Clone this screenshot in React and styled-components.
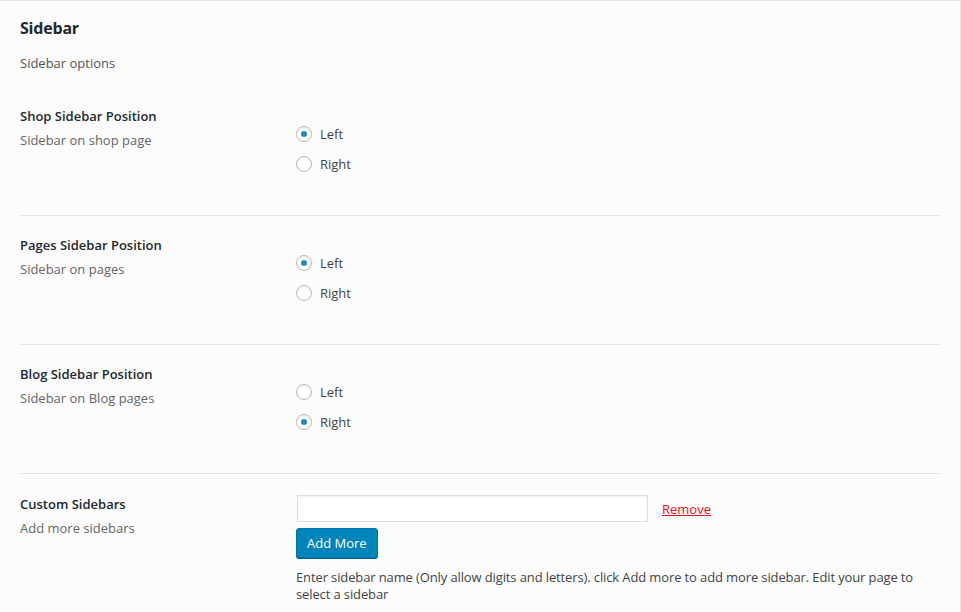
import React from "react";
import styled, { createGlobalStyle } from "styled-components";

const Global = createGlobalStyle`
  html, body { margin: 0; padding: 0; background: #f1f1f1; }
  body { font-family: "Open Sans", "Noto Sans", sans-serif; font-size: 13px; color: #444; }
  #root { min-height: 612px; }
`;

const Panel = styled.div`
  box-sizing: border-box;
  width: 961px;
  min-height: 612px;
  background: #fcfcfc;
  border-top: 1px solid #e5e5e5;
  border-right: 1px solid #e5e5e5;
  padding: 0 20px;
`;

const Header = styled.div`
  padding-top: 15px;
  padding-bottom: 14px;
`;

const Title = styled.h2`
  margin: 0;
  font-size: 16px;
  line-height: 24px;
  font-weight: 700;
  color: #23282d;
  letter-spacing: -0.2px;
`;

const Intro = styled.p`
  margin: 13px 0 0;
  line-height: 20px;
  color: #555;
`;

const Row = styled.div`
  box-sizing: border-box;
  display: grid;
  grid-template-columns: 276px 1fr;
  height: ${(p) => (p.$last ? "auto" : "129px")};
  border-bottom: ${(p) => (p.$last ? "none" : "1px solid #e3e3e3")};
`;

const LabelCol = styled.div`
  padding-top: ${(p) => (p.$last ? "20px" : "19px")};
`;

const RowTitle = styled.div`
  font-weight: 600;
  color: #23282d;
  line-height: 20px;
`;

const RowDesc = styled.div`
  margin-top: 4px;
  line-height: 20px;
  color: #666;
`;

const FieldCol = styled.div`
  padding-top: ${(p) => p.$top}px;
`;

const RadioList = styled.div`
  display: flex;
  flex-direction: column;
`;

const RadioLabel = styled.label`
  display: flex;
  align-items: center;
  height: 30px;
  color: #444;
  cursor: pointer;
`;

const Radio = styled.input.attrs({ type: "radio" })`
  appearance: none;
  -webkit-appearance: none;
  box-sizing: border-box;
  width: 16px;
  height: 16px;
  margin: 0 8px 0 0;
  border: 1px solid #b4b9be;
  border-radius: 50%;
  background: #fff;
  box-shadow: inset 0 1px 2px rgba(0, 0, 0, 0.07);
  display: inline-flex;
  align-items: center;
  justify-content: center;
  &:checked::before {
    content: "";
    width: 6px;
    height: 6px;
    border-radius: 50%;
    background: #1e8cbe;
  }
`;

const InputLine = styled.div`
  display: flex;
  align-items: center;
  gap: 14px;
`;

const TextInput = styled.input`
  box-sizing: border-box;
  width: 351px;
  height: 27px;
  margin: 0 0 0 1px;
  border: 1px solid #ddd;
  background: #fff;
  box-shadow: inset 0 1px 2px rgba(0, 0, 0, 0.07);
  font: inherit;
  padding: 2px 6px;
`;

const RemoveLink = styled.a`
  color: #e0121a;
  text-decoration: underline;
  cursor: pointer;
`;

const PrimaryButton = styled.button`
  box-sizing: border-box;
  margin-top: 6px;
  height: 30px;
  padding: 0 10px;
  font: inherit;
  color: #fff;
  background: #0085ba;
  border: 1px solid #0073aa;
  border-radius: 3px;
  box-shadow: 0 1px 0 #006799;
  cursor: pointer;
`;

const Help = styled.p`
  margin: 11px 0 0;
  line-height: 17px;
  color: #444;
  max-width: 640px;
  letter-spacing: -0.12px;
`;

const rows = [
  { title: "Shop Sidebar Position", desc: "Sidebar on shop page", value: "left" },
  { title: "Pages Sidebar Position", desc: "Sidebar on pages", value: "left" },
  { title: "Blog Sidebar Position", desc: "Sidebar on Blog pages", value: "right" },
];

export default function App() {
  return (
    <>
      <Global />
      <Panel>
        <Header>
          <Title>Sidebar</Title>
          <Intro>Sidebar options</Intro>
        </Header>
        {rows.map((r, i) => (
          <Row key={r.title}>
            <LabelCol>
              <RowTitle>{r.title}</RowTitle>
              <RowDesc>{r.desc}</RowDesc>
            </LabelCol>
            <FieldCol $top={32}>
              <RadioList>
                <RadioLabel>
                  <Radio name={`pos${i}`} defaultChecked={r.value === "left"} />
                  Left
                </RadioLabel>
                <RadioLabel>
                  <Radio name={`pos${i}`} defaultChecked={r.value === "right"} />
                  Right
                </RadioLabel>
              </RadioList>
            </FieldCol>
          </Row>
        ))}
        <Row $last>
          <LabelCol $last>
            <RowTitle>Custom Sidebars</RowTitle>
            <RowDesc>Add more sidebars</RowDesc>
          </LabelCol>
          <FieldCol $top={21}>
            <InputLine>
              <TextInput type="text" />
              <RemoveLink>Remove</RemoveLink>
            </InputLine>
            <PrimaryButton>Add More</PrimaryButton>
            <Help>
              Enter sidebar name (Only allow digits and letters). click Add more to add more sidebar. Edit your page to select a sidebar
            </Help>
          </FieldCol>
        </Row>
      </Panel>
    </>
  );
}
